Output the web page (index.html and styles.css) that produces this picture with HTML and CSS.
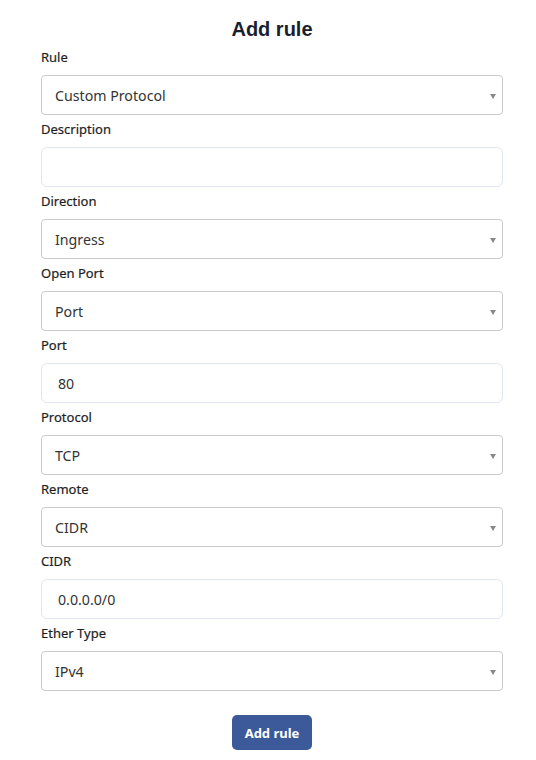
FILE: index.html
```html
<!DOCTYPE html>
<html lang="en">
<head>
<meta charset="utf-8">
<title>Add rule</title>
<link rel="stylesheet" href="styles.css">
</head>
<body>
<form class="rule-form">
  <h1 class="title">Add rule</h1>

  <div class="field">
    <label class="label">Rule</label>
    <div class="select">Custom Protocol</div>
  </div>
  <div class="field">
    <label class="label">Description</label>
    <div class="input"></div>
  </div>
  <div class="field">
    <label class="label">Direction</label>
    <div class="select">Ingress</div>
  </div>
  <div class="field">
    <label class="label">Open Port</label>
    <div class="select">Port</div>
  </div>
  <div class="field">
    <label class="label">Port</label>
    <div class="input">80</div>
  </div>
  <div class="field">
    <label class="label">Protocol</label>
    <div class="select">TCP</div>
  </div>
  <div class="field">
    <label class="label">Remote</label>
    <div class="select">CIDR</div>
  </div>
  <div class="field">
    <label class="label">CIDR</label>
    <div class="input">0.0.0.0/0</div>
  </div>
  <div class="field">
    <label class="label">Ether Type</label>
    <div class="select">IPv4</div>
  </div>

  <div class="actions">
    <button type="button" class="btn">Add rule</button>
  </div>
</form>
</body>
</html>
```

FILE: styles.css
```css
* { box-sizing: border-box; }
html, body { margin: 0; padding: 0; background: #fff; }
body { font-family: "Noto Sans", "Open Sans", sans-serif; color: #333; }

.rule-form {
  width: 462px;
  margin: 0 0 0 41px;
  padding-top: 17px;
}

.title {
  margin: 0 0 6px;
  font-family: "Liberation Sans", Arial, sans-serif;
  font-size: 20px;
  line-height: 24px;
  font-weight: bold;
  color: #1a1f2e;
  text-align: center;
}

.field { margin-bottom: 4px; }

.label {
  display: block;
  font-size: 13px;
  line-height: 20px;
  font-weight: 400;
  color: #1e1e1e;
  margin-bottom: 8px;
  -webkit-text-stroke: 0.2px #1e1e1e;
}

.select, .input {
  height: 40px;
  display: flex;
  align-items: center;
  font-size: 14.2px;
  color: #333;
  background: #fff;
}

.select {
  position: relative;
  border: 1px solid #c9c9c9;
  border-radius: 4px;
  padding-left: 13px;
}
.select::after {
  content: "";
  position: absolute;
  right: 6px;
  top: 18px;
  border-left: 3px solid transparent;
  border-right: 3px solid transparent;
  border-top: 5px solid #888;
}

.input {
  border: 1px solid #e0e6ef;
  border-radius: 6px;
  padding-left: 16px;
}

.actions {
  display: flex;
  justify-content: center;
  padding-top: 20px;
}

.btn {
  width: 80px;
  height: 35px;
  border: none;
  border-radius: 5px;
  background: #3c5a99;
  color: #fff;
  font-family: "Noto Sans", "Open Sans", sans-serif;
  font-size: 13px;
  font-weight: bold;
  padding: 0;
}
```
